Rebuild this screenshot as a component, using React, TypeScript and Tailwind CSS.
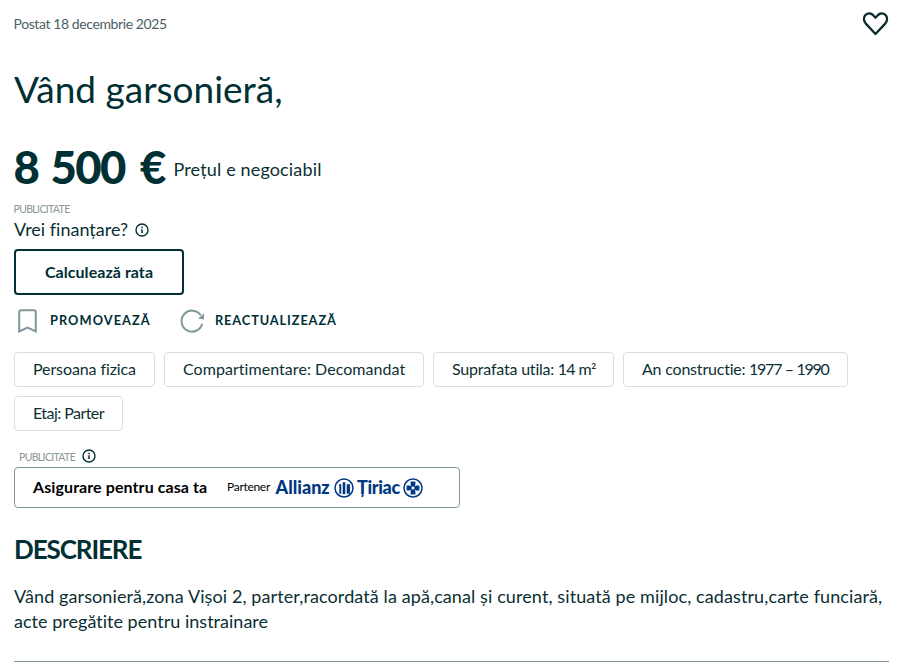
import React from "react";

const tags = [
  { label: "Persoana fizica", value: "", unit: "", box: "w-[141px]", labelText: "tracking-[-0.1px]", valueText: "" },
  { label: "Compartimentare: Decomandat", value: "", unit: "", box: "w-[260px]", labelText: "tracking-[0.05px]", valueText: "" },
  { label: "Suprafata utila:", value: " 14 m", unit: "²", box: "w-[181px]", labelText: "tracking-[-0.2px]", valueText: "tracking-[-0.6px]" },
  { label: "An constructie:", value: " 1977 – 1990", unit: "", box: "w-[225px]", labelText: "tracking-[-0.2px]", valueText: "tracking-[-1.25px] [word-spacing:0.8px]" },
  { label: "Etaj: Parter", value: "", unit: "", box: "w-[109px]", labelText: "tracking-[-0.55px]", valueText: "" },
];

const InfoIcon: React.FC = () => (
  <svg viewBox="0 0 14 14" className="w-[14px] h-[14px] shrink-0" fill="none" stroke="#002f34">
    <circle cx="7" cy="7" r="6" strokeWidth="1.4" />
    <path d="M7 6.3v3.7" strokeWidth="1.5" />
    <path d="M7 3.8v1.5" strokeWidth="1.5" />
  </svg>
);

const App: React.FC = () => {
  return (
    <div className="w-[900px] h-[662px] overflow-hidden bg-white pl-[14px] pr-[11px] font-['Lato',sans-serif] text-[#0b2f33] whitespace-nowrap [font-variant-ligatures:none]">
      {/* Date and favourite */}
      <div className="flex items-start justify-between h-[65px] pt-[11px]">
        <span className="mt-[3px] -ml-[0.5px] text-[14px] leading-[20px] tracking-[-0.4px] text-[#4b6063]">Postat 18 decembrie 2025</span>
        <svg viewBox="0 0 28 26" className="w-[28px] h-[26px]" fill="none" stroke="#0b2a2e" strokeWidth="2.3" strokeLinejoin="round">
          <path d="M14.5 23 L4.8 12.6 C2.4 9.8 2.3 6 4.6 3.9 C6.9 1.8 10.2 2.1 12.2 4.2 L14.5 6.7 L16.8 4.2 C18.8 2.1 22.1 1.8 24.4 3.9 C26.7 6 26.6 9.8 24.2 12.6 Z" />
        </svg>
      </div>

      <h1 className="h-[77px] text-[37px] leading-[48px] text-[#002f34]">Vând garsonieră,</h1>

      {/* Price */}
      <div className="flex items-start h-[61px]">
        <span className="w-[160px] -ml-[0.5px] text-[45.5px] leading-[50px] tracking-[-1.6px] font-black text-[#002f34]">
          <span className="[word-spacing:3px]">8 500</span>
          <span className="[word-spacing:6px]"> €</span>
        </span>
        <span className="mt-[15px] text-[18px] leading-[24px] tracking-[0.15px]">Prețul e negociabil</span>
      </div>

      {/* Financing */}
      <div className="h-[14px] -ml-[0.5px] text-[10.5px] leading-[12px] tracking-[-0.65px] text-[#8b9799]">PUBLICITATE</div>
      <div className="flex items-center h-[32px] pb-[7px]">
        <span className="w-[121px] -mt-[2px] text-[18px] leading-[24px]">Vrei finanțare?</span>
        <InfoIcon />
      </div>
      <button className="block w-[170px] h-[46px] pb-[1px] border-2 border-[#002f34] rounded-[4px] text-[16px] tracking-[0.05px] font-bold text-[#002f34]">
        Calculează rata
      </button>

      {/* Listing actions */}
      <div className="flex items-center h-[57px] pb-[6px] text-[12.8px] font-bold text-[#002f34]">
        <svg viewBox="0 0 20 24" className="w-[20px] h-[24px] ml-[4px] mr-[12px]" fill="none" stroke="#7f9799" strokeWidth="2">
          <path d="M1.2 22.4V3.2a2 2 0 0 1 2-2h12.6a2 2 0 0 1 2 2v19.2L9.5 18.5Z" />
        </svg>
        <span className="w-[130px] tracking-[1.05px]">PROMOVEAZĂ</span>
        <svg viewBox="0 0 25 24" className="w-[25px] h-[24px] mr-[10px]" fill="none" stroke="#7f9799" strokeWidth="2">
          <path d="M22.2 14.8A10.5 10.5 0 1 1 20.8 6.3" />
          <path d="M24 4.6v6l-6-1.2Z" fill="#7f9799" stroke="none" />
        </svg>
        <span className="tracking-[0.87px]">REACTUALIZEAZĂ</span>
      </div>

      {/* Parameters */}
      <div className="flex flex-wrap gap-[9px] h-[97px] content-start">
        {tags.map((tag) => (
          <div
            key={tag.label}
            className={`${tag.box} h-[35px] pl-[18px] border border-[#d8dfe0] rounded-[4px] text-[16px] leading-[32px]`}
          >
            <span className={tag.labelText}>{tag.label}</span>
            <span className={tag.valueText}>{tag.value}</span>
            <span className="inline-block leading-none align-[-2px]">{tag.unit}</span>
          </div>
        ))}
      </div>

      {/* Insurance banner */}
      <div className="flex items-start h-[18px] pl-[5px]">
        <span className="w-[63px] mt-[2px] text-[10.5px] leading-[12px] tracking-[-0.65px] text-[#8b9799]">PUBLICITATE</span>
        <InfoIcon />
      </div>
      <div className="flex items-center w-[446px] h-[41px] pl-[18px] border border-[#7f9799] rounded-[4px] text-black">
        <span className="w-[194px] pb-[2px] text-[16px] tracking-[0.09px] font-bold">Asigurare pentru casa ta</span>
        <span className="w-[48.5px] pb-[1px] text-[12px] tracking-[-0.3px]">Partener</span>
        <span className="w-[58.5px] pb-[1px] text-[18px] font-black text-[#003781]">Allianz</span>
        <svg viewBox="0 0 20 20" className="w-[20px] h-[20px] mr-[3px]" fill="none" stroke="#003781">
          <circle cx="10" cy="10" r="9" strokeWidth="1.5" />
          <path d="M10 4.2v12" strokeWidth="2.6" />
          <path d="M5 7.3h1.3v8.4M15 15.7V7.3h-1.3v8.4" strokeWidth="1.9" />
        </svg>
        <span className="w-[46px] pb-[1px] text-[18px] tracking-[-0.35px] font-black text-[#003781]">Țiriac</span>
        <svg viewBox="0 0 20 20" className="w-[20px] h-[20px]" fill="none" stroke="#003781">
          <circle cx="10" cy="10" r="9" strokeWidth="1.5" />
          <path
            d="M7.6 3.6h4.8v3.2l-1 1.8 1.8-1h3.2v4.8h-3.2l-1.8-1 1 1.8v3.2H7.6v-3.2l1-1.8-1.8 1H3.6V7.6h3.2l1.8 1-1-1.8Z"
            fill="#003781"
            stroke="none"
          />
          <rect x="8.7" y="8.7" width="2.6" height="2.6" fill="#fff" stroke="none" />
        </svg>
      </div>

      <h2 className="h-[76px] pt-[25px] text-[26px] leading-[32px] tracking-[-1.1px] font-bold text-[#002f34]">DESCRIERE</h2>
      <p className="h-[77px] text-[18px] leading-[25px] tracking-[0.1px]">
        Vând garsonieră,zona Vișoi 2, parter,racordată la apă,canal și curent, situată pe mijloc, cadastru,carte funciară,
        <br />
        <span className="tracking-[0.02px]">acte pregătite pentru instrainare</span>
      </p>
      <div className="border-t border-[#7f9799]" />
    </div>
  );
};

export default App;
